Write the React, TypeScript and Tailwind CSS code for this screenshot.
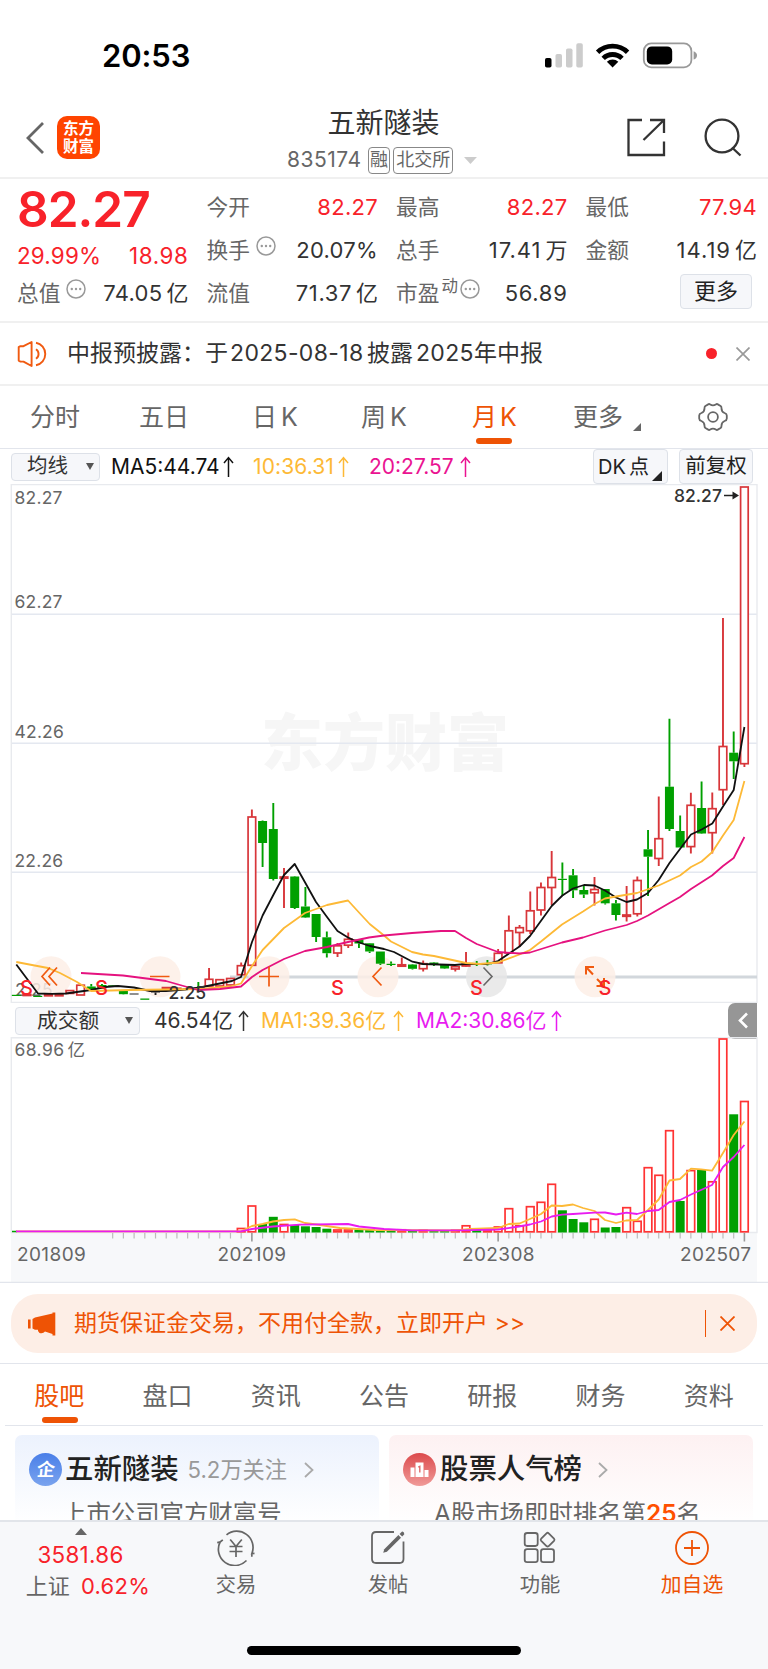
import React from "react";

/* ---------- chart data ---------- */

const PITCH = 10.707;
const LAST_X = 744.4;
const xAt = (k: number) => LAST_X - k * PITCH;

const RED = "#d8363a";
const GREEN = "#00a000";
const BLACK = "#222222";

// [months from the right, kind, body top, body bottom, wick top, wick bottom]
type Candle = [number, "r" | "g" | "d", number, number, number, number];

const candles: Candle[] = [
  [0, "r", 487, 763.7, 487, 767],
  [1, "g", 752.7, 761.3, 731.5, 779],
  [2, "r", 746.5, 789.7, 618, 805],
  [3, "r", 808.7, 832.7, 792.5, 853.5],
  [4, "g", 808, 833.5, 781.5, 834],
  [5, "r", 805.3, 846.6, 792.7, 853.5],
  [6, "g", 831, 847.5, 815.5, 847.5],
  [7, "g", 786.7, 829, 718.7, 831],
  [8, "r", 838.7, 858.5, 796.5, 866],
  [9, "g", 849.3, 856.7, 830, 896],
  [10, "r", 880.5, 913.8, 876.5, 916.5],
  [11, "r", 915, 916.3, 886, 921.5],
  [12, "g", 903.3, 915, 900, 920.5],
  [13, "g", 889, 903.3, 889, 904.5],
  [14, "r", 889.5, 892.8, 877, 905.5],
  [15, "g", 890, 894.5, 886, 898],
  [16, "g", 875.3, 890.3, 869, 898],
  [17, "g", 878.8, 880, 862.5, 896],
  [18, "r", 877.5, 887.5, 851, 905],
  [19, "r", 887.5, 910, 882.5, 915.5],
  [20, "r", 910.8, 930.8, 891.5, 934],
  [21, "r", 927.7, 932.5, 925, 947],
  [22, "r", 930.8, 953, 915.5, 953],
  [23, "r", 953.3, 962.8, 949, 963],
  [24, "g", 963.2, 964.4, 960, 965.5],
  [25, "g", 963.4, 964.6, 961, 966],
  [26, "r", 964.3, 966, 952, 966.5],
  [27, "r", 966.7, 969, 966, 971.5],
  [28, "g", 964.5, 968.5, 964, 969],
  [29, "g", 962.5, 965, 962, 966],
  [30, "r", 963.7, 968.7, 960.5, 971.5],
  [31, "g", 964.5, 968.8, 964, 969.5],
  [32, "r", 964.8, 966.2, 957.5, 967],
  [33, "g", 963.8, 965, 961.5, 966],
  [34, "g", 951.5, 963.7, 951.5, 965],
  [35, "g", 943.3, 951.5, 943, 953],
  [36, "g", 939.5, 943.5, 939, 948],
  [37, "r", 939.3, 945.2, 932.5, 948],
  [38, "r", 945.8, 953, 943, 957],
  [39, "g", 937.3, 953.2, 931.5, 957.5],
  [40, "g", 914, 937, 914, 942],
  [41, "g", 906.5, 917.5, 887, 918],
  [42, "g", 876.5, 908, 876, 909],
  [43, "r", 877, 878.2, 868, 908],
  [44, "g", 829, 879, 803, 880.5],
  [45, "g", 821, 843, 820.5, 867],
  [46, "r", 817, 965.3, 809.5, 965.3],
  [47, "r", 965.7, 974.7, 962.5, 975],
  [48, "r", 978.5, 985, 978, 985],
  [49, "r", 979.7, 986, 979, 986],
  [50, "r", 979.3, 986, 968, 986],
  [51, "g", 987.5, 988.7, 982, 989.5],
  [52, "g", 988.5, 989.5, 987, 990],
  [53, "r", 988.3, 989.3, 987.5, 990],
  [54, "r", 987.6, 988.6, 987, 989],
  [55, "d", 991.5, 992.5, 989, 995],
  [56, "g", 998.5, 999.8, 998.5, 999.8],
  [57, "d", 993.5, 994.5, 993.5, 994.5],
  [58, "g", 990, 994.2, 990, 994.5],
  [59, "g", 985.3, 987, 985, 987],
  [60, "g", 985, 988.5, 984, 989],
  [61, "g", 986.5, 989, 984, 990.5],
  [62, "r", 985.2, 995, 985, 995],
  [63, "r", 990.6, 993.4, 990, 994],
  [64, "r", 994.8, 995.8, 994.8, 995.8],
  [65, "r", 994.8, 995.8, 994.8, 995.8],
  [66, "g", 995.8, 997, 995.8, 997],
  [67, "r", 994.5, 995.5, 994.5, 995.5],
  [68, "g", 994.8, 996, 994.8, 996],
];

const ma5 =
  "16.3,964.5 38,993.5 52,993.8 66,993.5 91,990 105,987 118,986 134,987.5 150,991 166,991 185,989.5 200,987.5 232,981 241,977 252,942 262.6,915.5 273.3,895 284,875 294.7,864 305.4,883 316,902 327,917 337.5,931 348,937.5 359,942.5 370,946 384,949 394,952 412.5,961.7 423,964 455,965 466,963.8 487,964 498,961 519.5,946.5 530,936 551.7,906 562.4,895.5 573,888.5 584,885 594.5,885.5 605,890.5 616,897.5 626.6,902 637,899.5 648,893 658.7,880 669.5,863 680,849 691,834.5 701.6,829.5 712.3,823.5 723,806.5 733.7,790 744.4,727";
const ma10 =
  "16.3,962 32,965 48,968 60,973 77,982 91,991 130,990 200,989 230,986.5 241,983.5 252,966 262.6,950 284,928 305,913 327,905 348,900.5 359,912.5 369.7,924 384,935.5 391,941.5 412,952 423,954.5 434,956 466,963 480,964 498,962.5 519.5,954.5 530,950 541,941.5 562,924.5 583,911.5 594.5,904 605,898.5 616,896.5 637,893 658.7,885.5 680,875.5 691,867 701.6,861.5 712.3,852 723,835.5 733.7,820 744.4,781";
const ma20 =
  "81,973 123,975.5 166,981 180,985 198,990 220,989 241,986.5 252,977 262.6,970 284,959 305,951 327,947 348,942 369,937.5 384,935.5 412,933 441,931 455,931 466,938 476.7,944 498,952 519.5,953.5 530,952.5 562,942.5 583,937.5 605,930.5 626.6,925 637,921 648,915.5 669.5,903 680,897 691,889 712,875.5 723,866 733.7,858 744.4,837";

const volumes: [number, "r" | "g", number][] = [
  [0, "r", 1101.5], [1, "g", 1114.3], [2, "r", 1039], [3, "r", 1181.8], [4, "g", 1170], [5, "r", 1170.6],
  [6, "g", 1201], [7, "r", 1130.7], [8, "r", 1175.3], [9, "r", 1167.7], [10, "r", 1221.3], [11, "r", 1207.7],
  [12, "g", 1227], [13, "g", 1227.5], [14, "r", 1219.3], [15, "g", 1222.3], [16, "g", 1219], [17, "g", 1210.3],
  [18, "r", 1184.3], [19, "r", 1202.3], [20, "r", 1206.7], [21, "r", 1225.8], [22, "r", 1208.7], [23, "r", 1227],
  [24, "r", 1230], [25, "g", 1230], [26, "r", 1225.8], [27, "r", 1230.3], [28, "g", 1230.5], [29, "g", 1230.5],
  [30, "r", 1230.3], [31, "g", 1230.5], [32, "r", 1229.8], [33, "g", 1230], [34, "g", 1230], [35, "g", 1230],
  [36, "g", 1229.5], [37, "r", 1230], [38, "r", 1230], [39, "g", 1228.7], [40, "g", 1227], [41, "g", 1226.3],
  [42, "g", 1225], [43, "r", 1224.5], [44, "g", 1216.8], [45, "g", 1224], [46, "r", 1206], [47, "r", 1228.5],
];

const volMa1 =
  "16,1231.3 241,1231.3 252,1226 262.6,1224 273,1221.5 284,1220 294.7,1219.3 305,1223 320,1225 340,1228 375,1230 455,1230.5 470,1229 498,1228 508.8,1224 519.5,1223.5 530,1219 541,1214 551.7,1205.5 562,1206 573,1204.5 583,1208 594.5,1211 605,1220 616,1223 626,1220.5 637,1220 648,1210 658.7,1199.5 669.5,1180.5 680,1179 691,1168.7 701,1169.3 712,1170.7 723,1153 733.7,1135 744.4,1121.5";
const volMa2 =
  "16,1231.3 241,1231.3 252,1229 273,1226.5 300,1224.7 348,1224 359,1226.5 384,1229 412,1230.3 460,1230.3 498,1229.5 519,1226.5 530,1224.5 541,1221.5 551.7,1216.5 562,1214.7 573,1214 594.5,1212.7 605,1212.5 616,1214.5 626.6,1212.7 637,1214 648,1211 658.7,1210 669.5,1202 680,1200 691,1194.5 701,1190 712,1185 723,1167 733.7,1157 744.4,1145";

const SANS = "Inter, 'Noto Sans CJK SC', sans-serif";

/* ---------- small shared pieces ---------- */

function Dots() {
  return (
    <svg width="20" height="20" viewBox="0 0 20 20" className="shrink-0">
      <circle cx="10" cy="10" r="9" fill="none" stroke="#999" strokeWidth="1.5" />
      <circle cx="5.8" cy="10" r="1.2" fill="#999" />
      <circle cx="10" cy="10" r="1.2" fill="#999" />
      <circle cx="14.2" cy="10" r="1.2" fill="#999" />
    </svg>
  );
}

function UpArrow({ className }: { className: string }) {
  return (
    <svg width="11" height="22" viewBox="0 0 11 22" fill="none" stroke="currentColor" strokeWidth="1.5" className={`shrink-0 ${className}`}>
      <path d="M5.5 21V1.8M1 7L5.5 1.6L10 7" />
    </svg>
  );
}

type QuoteProps = { label: string; value: string; unit?: string; tone?: string; children?: React.ReactNode };

function Quote({ label, value, unit, tone = "text-[#333] tracking-[0.3px]", children }: QuoteProps) {
  return (
    <div className="flex h-[43px] items-center text-[22px] leading-[43px]">
      <span className="text-[21.7px] text-[#666]">{label}</span>
      {children}
      <span className={`ml-auto ${tone}`}>{value}</span>
      {unit ? <span className="ml-[4px] text-[#333]">{unit}</span> : null}
    </div>
  );
}

/* ---------- sections ---------- */

function StatusBar() {
  return (
    <div className="flex h-[102px] items-start pt-[37px]">
      <span className="ml-[102px] w-[443px] text-[31px] leading-[37px] font-semibold tracking-[-0.1px] text-black">20:53</span>
      <svg width="152" height="28" viewBox="545 42 152 28" className="mt-[5px]">
        <rect x="545" y="58" width="6.5" height="9.6" rx="1.8" />
        <rect x="555.5" y="54" width="6.5" height="13.6" rx="1.8" fill="#ccc" />
        <rect x="566" y="48.5" width="6.5" height="19.1" rx="1.8" fill="#ccc" />
        <rect x="576.3" y="43.3" width="6.5" height="24.3" rx="1.8" fill="#ccc" />
        <g fill="none" stroke="#000" strokeWidth="4.8">
          <path d="M597.6 52.2A21.5 21.5 0 0 1 627.6 52.2" />
          <path d="M603.2 58.4A13.3 13.3 0 0 1 622 58.4" />
        </g>
        <path d="M612.6 67.6L606.9 61.8A8.2 8.2 0 0 1 618.3 61.8Z" />
        <rect x="643.8" y="43.4" width="47.6" height="24" rx="7.5" fill="none" stroke="#999" strokeWidth="1.8" />
        <rect x="646.8" y="46.4" width="25.4" height="18" rx="5" />
        <path d="M693.6 51.3Q697 52.5 697 55.4Q697 58.3 693.6 59.5Z" fill="#999" />
      </svg>
    </div>
  );
}

function Header() {
  return (
    <div className="flex h-[77px] items-start border-b-2 border-[#f0f0f0]">
      <svg width="20" height="34" viewBox="0 0 20 34" className="mt-[19px] ml-[25px]" fill="none" stroke="#666" strokeWidth="2.8">
        <path d="M18 2L3 17L18 32" />
      </svg>
      <div className="mt-[14px] ml-[12px] flex h-[43px] w-[43px] flex-col items-center justify-center rounded-[10px] bg-[#ff4400] text-[15.5px] leading-[18px] font-bold text-white">
        <span>东方</span>
        <span>财富</span>
      </div>
      <div className="ml-[187px] flex w-[193px] flex-col items-center">
        <div className="mt-[3px] text-[28px] leading-[36px] text-[#333]">五新隧装</div>
        <div className="mt-[5px] mr-[3px] flex h-[28px] w-[190px] items-center text-[21px] leading-[28px] text-[#666]">
          <span className="w-[81px] tracking-[0.5px]">835174</span>
          <span className="flex h-[27px] w-[23px] items-center justify-center rounded-[4px] border border-[#888] text-[18px]">融</span>
          <span className="ml-[3px] flex h-[27px] w-[60px] items-center justify-center rounded-[4px] border border-[#888] text-[18px]">北交所</span>
          <svg width="13" height="7" viewBox="0 0 13 7" className="ml-[11px]">
            <path d="M0 0H13L6.5 7Z" fill="#ccc" />
          </svg>
        </div>
      </div>
      <svg width="40" height="40" viewBox="0 0 40 40" className="mt-[15px] ml-[146px]" fill="none" stroke="#333" strokeWidth="2.3">
        <path d="M16 3H2.5V38H38V24.5M24 3H38V16M38 3L17.5 23" />
      </svg>
      <svg width="42" height="42" viewBox="0 0 42 42" className="mt-[15px] ml-[37px]" fill="none" stroke="#333" strokeWidth="2.3">
        <circle cx="19" cy="19" r="16.4" />
        <path d="M29 30.5L37.5 38.5" />
      </svg>
    </div>
  );
}

const UP = "text-[#f8222a] tracking-[0.3px]";

function Quotes() {
  return (
    <div className="grid h-[144px] grid-cols-4 gap-x-[18px] border-b-2 border-[#f0f0f0] pt-[7px] pr-[11px] pl-[17px]">
      <div>
        <div className="flex h-[47px] items-center text-[49.5px] leading-[47px] font-semibold tracking-[-1px] text-[#f8222a]">82.27</div>
        <div className="flex h-[39px] items-center justify-between pt-[5px] text-[22.4px] leading-[37px] text-[#f8222a]">
          <span className="tracking-[0.2px]">29.99%</span>
          <span className="tracking-[0.6px]">18.98</span>
        </div>
        <Quote label="总值" value="74.05" unit="亿">
          <span className="mb-[9px] ml-[6px]"><Dots /></span>
        </Quote>
      </div>
      <div>
        <Quote label="今开" value="82.27" tone={UP} />
        <Quote label="换手" value="20.07%">
          <span className="mb-[9px] ml-[6px]"><Dots /></span>
        </Quote>
        <Quote label="流值" value="71.37" unit="亿" tone="text-[#333] tracking-[0.6px]" />
      </div>
      <div>
        <Quote label="最高" value="82.27" tone={UP} />
        <Quote label="总手" value="17.41" unit="万" tone="text-[#333] tracking-[1px]" />
        <Quote label="市盈" value="56.89" tone="text-[#333] tracking-[0.7px]">
          <span className="mb-[16px] ml-[2px] text-[16.5px] leading-[20px] text-[#666]">动</span>
          <span className="mb-[9px] ml-[2px]"><Dots /></span>
        </Quote>
      </div>
      <div>
        <Quote label="最低" value="77.94" tone={UP} />
        <Quote label="金额" value="14.19" unit="亿" tone="text-[#333] tracking-[1px]" />
        <div className="mt-[2px] mr-[5px] ml-auto flex h-[35px] w-[72px] items-center justify-center rounded-[4px] border border-[#dde1e8] bg-[#f6f7fa] text-[22px] text-[#222]">更多</div>
      </div>
    </div>
  );
}

function Notice() {
  return (
    <div className="flex h-[63px] items-center border-b-2 border-[#f0f0f0] text-[23px] text-[#333]">
      <svg width="32" height="26" viewBox="0 0 32 26" className="ml-[17px]" fill="none" stroke="#f05a10" strokeWidth="1.9" strokeLinejoin="round">
        <path d="M1.7 6.2L3.5 5.2H6.5L14.6 1V25L6.5 20.6H3.5L1.7 19.6Z" />
        <path d="M19 8.3A5.6 5.6 0 0 1 19 17.7M19 1.8A11.4 11.4 0 0 1 19 24.2" />
      </svg>
      <span className="ml-[18px] whitespace-nowrap">中报预披露：</span>
      <span className="whitespace-nowrap">于</span>
      <span className="ml-[2px] w-[137px] tracking-[0.35px] whitespace-nowrap">2025-08-18</span>
      <span className="whitespace-nowrap">披露</span>
      <span className="ml-[3px] w-[58px] tracking-[0.3px] whitespace-nowrap">2025</span>
      <span className="whitespace-nowrap">年中报</span>
      <span className="ml-auto h-[11px] w-[11px] rounded-full bg-[#f8222a]" />
      <svg width="14" height="14" viewBox="0 0 14 14" className="mr-[18px] ml-[19px]" stroke="#999" strokeWidth="1.7">
        <path d="M0.5 0.5L13.5 13.5M13.5 0.5L0.5 13.5" />
      </svg>
    </div>
  );
}

function PeriodTabs() {
  return (
    <div className="flex h-[63px] items-center border-b border-[#e2e5ec] text-[25px] leading-[62px] whitespace-nowrap text-[#666]">
      <span className="ml-[30px] w-[109px]">分时</span>
      <span className="w-[113px]">五日</span>
      <span className="w-[109px]">日<span className="ml-[4px]">K</span></span>
      <span className="w-[111px]">周<span className="ml-[4px]">K</span></span>
      <div className="relative w-[101px] text-[#ee5305]">
        月<span className="ml-[3px]">K</span>
        <span className="absolute bottom-[4px] left-[4px] h-[6px] w-[36px] rounded-full bg-[#ee5305]" />
      </div>
      <span>更多</span>
      <svg width="8" height="8" viewBox="0 0 8 8" className="mt-[20px] ml-[10px]">
        <path d="M8 0V8H0Z" fill="#666" />
      </svg>
      <svg width="32" height="32" viewBox="-16 -16 32 32" className="ml-[56px]" fill="none" stroke="#666" strokeWidth="1.8" strokeLinejoin="round">
        <path d="M-4.8 -12.6Q-4 -13.4 -2.8 -12.6Q0 -10.8 2.8 -12.6Q4 -13.4 4.8 -12.6L7.6 -11Q8.6 -10.2 8.5 -8.8Q8.4 -5.4 11.6 -4Q13.8 -3.2 13.8 -1.4V1.4Q13.8 3.2 11.6 4Q8.4 5.4 8.5 8.8Q8.6 10.2 7.6 11L4.8 12.6Q4 13.4 2.8 12.6Q0 10.8 -2.8 12.6Q-4 13.4 -4.8 12.6L-7.6 11Q-8.6 10.2 -8.5 8.8Q-8.4 5.4 -11.6 4Q-13.8 3.2 -13.8 1.4V-1.4Q-13.8 -3.2 -11.6 -4Q-8.4 -5.4 -8.5 -8.8Q-8.6 -10.2 -7.6 -11Z" />
        <circle r="4.9" />
      </svg>
    </div>
  );
}

function MaBar() {
  return (
    <div className="flex h-[35px] items-center text-[21px] whitespace-nowrap">
      <div className="ml-[11px] flex h-[28px] w-[89px] items-center rounded-[4px] border border-[#dde1e8] bg-[#f6f7fa] pl-[15px] text-[20.5px] text-[#333]">
        均线
        <svg width="8" height="7" viewBox="0 0 8 7" className="ml-[18px]">
          <path d="M0 0H8L4 7Z" fill="#555" />
        </svg>
      </div>
      <span className="ml-[11px] w-[112px] text-[#111]">MA5:44.74</span>
      <UpArrow className="text-[#111]" />
      <span className="ml-[19px] w-[85px] tracking-[0.1px] text-[#fdb936]">10:36.31</span>
      <UpArrow className="text-[#fdb936]" />
      <span className="ml-[20px] w-[91px] text-[#ea1391]">20:27.57</span>
      <UpArrow className="text-[#ea1391]" />
      <div className="mr-[11px] ml-auto flex h-[35px] w-[75px] items-center rounded-[4px] border border-[#dde1e8] bg-[#f6f7fa] pl-[4px] text-[20px] text-[#222]">
        DK<span className="ml-[3px]">点</span>
        <svg width="10" height="10" viewBox="0 0 10 10" className="mt-[19px] ml-[3px]">
          <path d="M10 0V10H0Z" fill="#222" />
        </svg>
      </div>
      <div className="mr-[15px] flex h-[35px] w-[74px] items-center justify-center rounded-[4px] border border-[#dde1e8] bg-[#f6f7fa] text-[20.5px] text-[#222]">前复权</div>
    </div>
  );
}

function CandleChart() {
  return (
    <svg width="768" height="519" viewBox="0 484 768 519" className="block" style={{ fontFamily: SANS }}>
      <text x="261" y="766" fontSize="62" fontWeight="900" fill="#f6f6f6">东方财富</text>
      <g stroke="#e4e8f0" strokeWidth="1.4">
        <path d="M11 614.3H757M11 743.3H757M11 872.2H757" />
        <path d="M11.3 1002.5V484.6H757V1002.5Z" fill="none" stroke="#e8eaee" />
      </g>
      <path d="M230 977H757" stroke="#d2d7dc" strokeWidth="3.2" />
      <g fontSize="17.5" fill="#666" letterSpacing="0.2">
        <text x="14.5" y="504">82.27</text>
        <text x="14.5" y="608.3">62.27</text>
        <text x="14.5" y="737.6">42.26</text>
        <text x="14.5" y="867.3">22.26</text>
        <text x="15" y="996.3">2.25</text>
      </g>
      {[51, 160, 269, 378, 595].map((cx) => (
        <circle key={cx} cx={cx} cy="976.7" r="20.5" fill="#fdeee6" fillOpacity="0.85" />
      ))}
      <circle cx="486.5" cy="976.7" r="20.5" fill="#e6e6e6" fillOpacity="0.85" />
      {candles.map(([k, kind, t, b, wt, wb]) => {
        const x = xAt(k);
        const color = kind === "r" ? RED : kind === "g" ? GREEN : BLACK;
        return (
          <g key={k} stroke={color}>
            <path d={`M${x} ${wt}V${t}M${x} ${b}V${wb}`} strokeWidth="1.9" />
            {kind === "r" ? (
              <rect x={x - 3.8} y={t} width="7.6" height={b - t} fill="#fff" strokeWidth="1.7" />
            ) : (
              <rect x={x - 4.5} y={t} width="9" height={b - t} fill={color} stroke="none" />
            )}
          </g>
        );
      })}
      <g fill="none" strokeWidth="1.8" strokeLinejoin="round">
        <polyline points={ma5} stroke="#111" />
        <polyline points={ma10} stroke="#fdb936" />
        <polyline points={ma20} stroke="#e5127f" />
      </g>
      <g fill="none" stroke="#f05a10" strokeWidth="1.7">
        <path d="M50 967.5L42 976.5L50 985.5M57 967.5L49 976.5L57 985.5" />
        <path d="M150 976.5H169.5M259 976.5H279M269 966.5V986.5" />
        <path d="M381.5 967.5L373 976.5L381.5 985.5" />
        <path d="M586 967L593 974.5M586 974.5V967H594M597 979L603.5 985.5M604 978V986H596.5" strokeWidth="2" />
      </g>
      <path d="M483.5 967.5L492 976.5L483.5 985.5" fill="none" stroke="#666" strokeWidth="1.6" />
      <g fontSize="20" fontWeight="500" fill="#f8222a" textAnchor="middle">
        <text x="26.5" y="994.5">S</text>
        <text x="101.5" y="994.5">S</text>
        <text x="337.5" y="994.5">S</text>
        <text x="476.5" y="994.5">S</text>
        <text x="605" y="994.5">S</text>
      </g>
      <g fontSize="17.5" fontWeight="500" fill="#333">
        <text x="168.5" y="998.5">2.25</text>
        <text x="674" y="502">82.27</text>
      </g>
      <path d="M724 495.5H735" stroke="#222" strokeWidth="1.5" />
      <path d="M739 495.5L732.5 491.5V499.5Z" fill="#222" />
    </svg>
  );
}

function VolumeBar() {
  return (
    <div className="flex h-[34px] items-center pt-px text-[21px] whitespace-nowrap">
      <div className="ml-[15px] flex h-[28px] w-[125px] items-center rounded-[4px] border border-[#dde1e8] bg-[#f6f7fa] pl-[21px] text-[20.7px] text-[#333]">
        成交额
        <svg width="8" height="7" viewBox="0 0 8 7" className="ml-[26px]">
          <path d="M0 0H8L4 7Z" fill="#555" />
        </svg>
      </div>
      <span className="ml-[14px] w-[84px] text-[#333]">46.54亿</span>
      <UpArrow className="text-[#333]" />
      <span className="ml-[12px] w-[132px] text-[#fdb936]">MA1:39.36亿</span>
      <UpArrow className="text-[#fdb936]" />
      <span className="ml-[12px] w-[135px] text-[#e81cf0]">MA2:30.86亿</span>
      <UpArrow className="text-[#e81cf0]" />
      <div className="-my-[2px] mr-[11px] ml-auto flex h-[36px] w-[29px] items-center justify-center rounded-l-[7px] bg-[#969696]">
        <svg width="10" height="17" viewBox="0 0 10 17" fill="none" stroke="#fff" strokeWidth="2.6">
          <path d="M9 1.5L2 8.5L9 15.5" />
        </svg>
      </div>
    </div>
  );
}

function VolumeChart() {
  const ticks = Array.from({ length: 60 }, (_, k) => k);
  return (
    <svg width="768" height="246" viewBox="0 1037 768 246" className="block" style={{ fontFamily: SANS }}>
      <rect x="11" y="1232.5" width="746" height="50" fill="#f7f8fa" />
      <path d="M11.3 1232.5V1037.7H757V1232.5Z" fill="none" stroke="#e8eaee" strokeWidth="1.4" />
      <path d="M0 1282.3H768" stroke="#e2e5ec" strokeWidth="1.2" />
      <text x="14.5" y="1055.5" fontSize="17.5" fill="#666" letterSpacing="0.4">68.96<tspan dx="3">亿</tspan></text>
      {ticks.map((k) => {
        const major = k === 0 || k === 23 || k === 46;
        return (
          <path
            key={k}
            d={`M${xAt(k)} 1233V${major ? 1241.5 : 1238.5}`}
            stroke={major ? "#999" : "#bbb"}
            strokeWidth={major ? 1.6 : 1.2}
          />
        );
      })}
      {volumes.map(([k, kind, t]) =>
        kind === "r" ? (
          <rect key={k} x={xAt(k) - 3.8} y={t} width="7.6" height={1231.8 - t} fill="#fff" stroke="#f33" strokeWidth="1.7" />
        ) : (
          <rect key={k} x={xAt(k) - 4.5} y={t} width="9" height={1232.5 - t} fill={GREEN} />
        ),
      )}
      <path d="M12 1231.5H17" stroke={GREEN} strokeWidth="1.5" />
      <g fill="none" strokeWidth="1.8" strokeLinejoin="round">
        <polyline points={volMa1} stroke="#fdb936" />
        <polyline points={volMa2} stroke="#e81cf0" />
      </g>
      <g fontSize="19" fill="#666" letterSpacing="0.4">
        <text x="17" y="1261.3">201809</text>
        <text x="252" y="1261.3" textAnchor="middle">202109</text>
        <text x="498.5" y="1261.3" textAnchor="middle">202308</text>
        <text x="751.5" y="1261.3" textAnchor="end">202507</text>
      </g>
    </svg>
  );
}

function Banner() {
  return (
    <div className="h-[81px] border-b border-[#e2e5ec] px-[11px] pt-[11px]">
      <div className="flex h-[59px] items-center rounded-[27px] bg-[#fdeee6] text-[23px] whitespace-nowrap text-[#ee5305]">
        <svg width="28" height="24" viewBox="0 0 28 24" className="ml-[17px]" fill="#ee5305">
          <path d="M0 7.5H2.6V16.5H0ZM4.5 7L7 5.5L24.5 1.5V0.5H27.3V23.5H24.5V22L17 19.5Q15 22 11.5 21L10 19V17.8L7 17.8L4.5 16.5Z" />
        </svg>
        <span className="ml-[18px]">期货保证金交易，不用付全款，立即开户 &gt;&gt;</span>
        <span className="ml-auto h-[27px] w-[1.5px] bg-[#ee5305]" />
        <svg width="15" height="15" viewBox="0 0 15 15" className="mr-[22px] ml-[14px]" stroke="#ee5305" strokeWidth="1.8">
          <path d="M0.5 0.5L14.5 14.5M14.5 0.5L0.5 14.5" />
        </svg>
      </div>
    </div>
  );
}

const sections = ["股吧", "盘口", "资讯", "公告", "研报", "财务", "资料"];

function SectionTabs() {
  return (
    <div className="mx-[5px] flex h-[62px] border-b border-[#e2e5ec] text-[25px] leading-[64px] text-[#666]">
      {sections.map((s, i) =>
        i === 0 ? (
          <div key={s} className="relative flex-1 text-center text-[#ee5305]">
            {s}
            <span className="absolute bottom-[2px] left-[37px] h-[6px] w-[36px] rounded-full bg-[#ee5305]" />
          </div>
        ) : (
          <div key={s} className="flex-1 text-center">{s}</div>
        ),
      )}
    </div>
  );
}

function CardChevron({ className }: { className: string }) {
  return (
    <svg width="10" height="16" viewBox="0 0 10 16" fill="none" stroke="#aaa" strokeWidth="1.8" className={className}>
      <path d="M1 1L8.5 8L1 15" />
    </svg>
  );
}

function Cards() {
  return (
    <div className="flex h-[94px] gap-[10px] overflow-hidden px-[15px] pt-[9px] whitespace-nowrap">
      <div className="h-[120px] flex-1 rounded-[7px] bg-linear-to-b from-[#ecf2fd] to-[#ffffff] to-75%">
        <div className="flex h-[69px] items-center pl-[14px]">
          <div className="flex h-[33px] w-[33px] items-center justify-center rounded-full bg-linear-to-b from-[#4a7fe8] to-[#7aa3ee] text-[18px] font-bold text-white">
            <span className="-skew-x-6">企</span>
          </div>
          <span className="ml-[3px] text-[28.4px] font-medium text-[#222]">五新隧装</span>
          <span className="ml-[9px] text-[22.2px] text-[#999]">5.2万关注</span>
          <CardChevron className="ml-[17px]" />
        </div>
        <div className="-mt-[8px] pl-[47px] text-[24.4px] leading-[34px] text-[#666]">上市公司官方财富号</div>
      </div>
      <div className="h-[120px] flex-1 rounded-[7px] bg-linear-to-b from-[#fdf1f2] to-[#ffffff] to-75%">
        <div className="flex h-[69px] items-center pl-[14px]">
          <svg width="33" height="33" viewBox="0 0 33 33">
            <defs>
              <linearGradient id="rank" x1="0" y1="0" x2="0" y2="1">
                <stop offset="0" stopColor="#dc4a4c" />
                <stop offset="1" stopColor="#f09a98" />
              </linearGradient>
            </defs>
            <circle cx="16.5" cy="16.5" r="16.5" fill="url(#rank)" />
            <path d="M7.5 14.5H11.5V24H7.5ZM12.5 9.5H20.5V24H12.5ZM21.5 17H25.5V24H21.5Z" fill="#fff" />
            <path d="M15.3 14.2L16.8 13.4V19.6" fill="none" stroke="#e06a6a" strokeWidth="1.4" />
          </svg>
          <span className="ml-[4px] text-[28.4px] font-medium text-[#222]">股票人气榜</span>
          <CardChevron className="ml-[16px]" />
        </div>
        <div className="-mt-[8px] pl-[45px] text-[24.4px] leading-[34px] text-[#666]">
          A股市场即时排名第<span className="font-semibold text-[#ff5000]">25</span>名
        </div>
      </div>
    </div>
  );
}

function BottomBar() {
  return (
    <div className="flex h-[149px] flex-col border-t-2 border-[#e2e5ea] bg-[#f7f8fa]">
      <div className="flex h-[124px] pl-[8px] text-[20.3px] text-[#666]">
        <div className="flex w-[152px] flex-col items-center">
          <svg width="12" height="7" viewBox="0 0 12 7" className="mt-[6px] mr-[7px]">
            <path d="M0 7H12L6 0Z" fill="#666" />
          </svg>
          <span className="mt-[5px] mr-[7px] text-[22.4px] leading-[30px] tracking-[0.3px] text-[#f8222a]">3581.86</span>
          <div className="ml-[8px] flex text-[22px] leading-[32px]">
            上证<span className="ml-[11px] tracking-[0.3px] text-[#f8222a]">0.62%</span>
          </div>
        </div>
        <div className="flex w-[152px] flex-col items-center">
          <svg width="40" height="36" viewBox="-20 -18 40 36" className="mt-[8px]" fill="none" stroke="#666" strokeWidth="1.7">
            <path d="M-9.5 -13.2A16.3 16.3 0 0 1 15.9 5.5L18.5 5.3M15.8 8.8L15.9 5.5M10.5 12.5A16.3 16.3 0 0 1 -15.9 -6L-18.8 -5.4M-13.2 -8.2L-15.9 -6" />
            <path d="M-5.8 -8.5L0 -1.5L5.8 -8.5M0 -1.5V9M-6.5 -1.5H6.5M-6.5 3.5H6.5" />
          </svg>
          <span className="mt-[4px] leading-[30px]">交易</span>
        </div>
        <div className="flex w-[152px] flex-col items-center">
          <svg width="36" height="36" viewBox="0 0 36 36" className="mt-[8px]" fill="none" stroke="#666" strokeWidth="1.8">
            <path d="M24 2H6Q2 2 2 6V29Q2 33 6 33H29.5Q33.5 33 33.5 29V11.5" />
            <path d="M13.2 22.8L14.3 19.2L28.4 5.1L31 7.7L16.9 21.8Z" fill="#666" stroke="none" />
            <path d="M29.6 3.9L31.8 1.7Q34 1 34.3 4.3L32.2 6.5Z" fill="#666" stroke="none" />
          </svg>
          <span className="mt-[4px] leading-[30px]">发帖</span>
        </div>
        <div className="flex w-[152px] flex-col items-center">
          <svg width="36" height="36" viewBox="0 0 36 36" className="mt-[8px]" fill="none" stroke="#666" strokeWidth="1.8" strokeLinejoin="round">
            <rect x="2.7" y="3" width="13" height="13" rx="2.4" />
            <rect x="2.7" y="19.2" width="13" height="13" rx="2.4" />
            <rect x="19" y="19.2" width="13" height="13" rx="2.4" />
            <path d="M24.5 3.3L19.2 8.6Q18.2 9.7 19.2 10.8L24.5 16.1Q25.6 17 26.7 16.1L32 10.8Q33 9.7 32 8.6L26.7 3.3Q25.6 2.3 24.5 3.3Z" />
          </svg>
          <span className="mt-[4px] leading-[30px]">功能</span>
        </div>
        <div className="flex w-[152px] flex-col items-center text-[#ee5305]">
          <svg width="36" height="36" viewBox="0 0 36 36" className="mt-[8px]" fill="none" stroke="#ee5305" strokeWidth="1.8">
            <circle cx="18" cy="18" r="16" />
            <path d="M18 10V26M10 18H26" />
          </svg>
          <span className="mt-[4px] text-[20.8px] leading-[30px]">加自选</span>
        </div>
      </div>
      <div className="mx-auto h-[9px] w-[274px] rounded-full bg-black" />
    </div>
  );
}

export default function App() {
  return (
    <div className="flex h-[1669px] w-[768px] flex-col overflow-hidden bg-white font-[Inter,'Noto_Sans_CJK_SC',sans-serif]" lang="zh-CN">
      <StatusBar />
      <Header />
      <Quotes />
      <Notice />
      <PeriodTabs />
      <MaBar />
      <CandleChart />
      <VolumeBar />
      <VolumeChart />
      <Banner />
      <SectionTabs />
      <Cards />
      <BottomBar />
    </div>
  );
}
